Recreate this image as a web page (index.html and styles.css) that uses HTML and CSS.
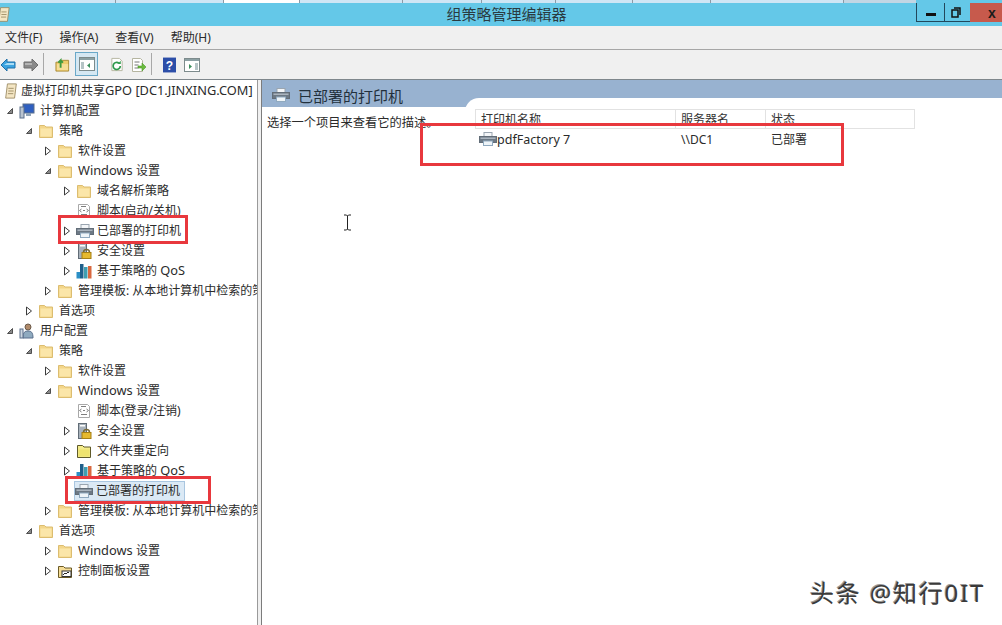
FILE: index.html
```html
<!DOCTYPE html>
<html lang="zh-CN">
<head>
<meta charset="utf-8">
<title>组策略管理编辑器</title>
<link rel="stylesheet" href="styles.css">
</head>
<body>
<svg class="defs" width="0" height="0" aria-hidden="true">
  <defs>
    <symbol id="folder" viewBox="0 0 16 16">
      <path d="M1.500 14.500V2.500h5l1.500 1.500h6.500v10.500z" fill="#f3d68a" stroke="#dcbd70"/>
      <path d="M2.500 13.500V5.500h11v8z" fill="#fbe6a9"/>
    </symbol>
    <symbol id="printer" viewBox="0 0 18 16">
      <rect x="5" y="1.500" width="8" height="5" fill="#f4f6f8" stroke="#9aa5b0"/>
      <rect x="0.500" y="5.500" width="17" height="6" fill="#6d7985" stroke="#626d78"/>
      <rect x="1.500" y="6.500" width="15" height="1.500" fill="#aab4be"/>
      <rect x="4.500" y="10" width="9" height="4.500" fill="#eef4f8" stroke="#8fa9bf"/>
    </symbol>
    <symbol id="open" viewBox="0 0 8 8"><path d="M1.500 6.500L6.500 1.500V6.500z" fill="#8a8a8a" stroke="#505050"/></symbol>
    <symbol id="closed" viewBox="0 0 8 10"><path d="M1.500 1L6.500 5 1.500 9z" fill="#fff" stroke="#3c3c3c"/></symbol>
    <symbol id="script" viewBox="0 0 16 16">
      <path d="M2.500 1.500h9l2 2v11h-11z" fill="#fff" stroke="#a8a8a8"/>
      <path d="M5.500 6l-2 1.500 2 1.500M10.500 6l2 1.500-2 1.500M7 7.500h2M5 11.500h6M5 3.500h5" fill="none" stroke="#7f7f7f"/>
    </symbol>
    <symbol id="security" viewBox="0 0 16 16">
      <rect x="2.500" y="0.500" width="8" height="15" fill="#a8b2bb" stroke="#616c76"/>
      <rect x="4" y="2" width="5" height="1.500" fill="#fff"/>
      <path d="M7.500 9.500a3 3 0 0 1 6 0" fill="none" stroke="#7b6a36" stroke-width="1.500"/>
      <rect x="6" y="9.500" width="9" height="6" fill="#e6b92e" stroke="#a57f15"/>
    </symbol>
    <symbol id="qos" viewBox="0 0 16 16">
      <rect x="0.500" y="9" width="3.500" height="6.500" fill="#2a8fc6"/>
      <rect x="4" y="1" width="3.500" height="14.500" fill="#1f5f8a"/>
      <rect x="8" y="4" width="3.500" height="11.500" fill="#3f9eb0"/>
      <rect x="12" y="3" width="3.500" height="12.500" fill="#d9683f"/>
    </symbol>
    <symbol id="redirect" viewBox="0 0 16 16">
      <path d="M1.500 14.500V2.500h5l1.500 1.500h6.500v10.500z" fill="#f4ec8c" stroke="#5f5a2a"/>
      <path d="M2.500 6.500h11v7h-11z" fill="#eee36f"/>
    </symbol>
    <symbol id="panel" viewBox="0 0 16 16">
      <path d="M1.500 14.500V3.500h5l1.500 1.500h6.500v9.500z" fill="#f6dd96" stroke="#6b5a26"/>
      <rect x="5" y="8" width="9" height="5.500" fill="#fff" stroke="#333"/>
      <path d="M6 12l2-2 1 1 2-2 1 1" fill="none" stroke="#2b2b2b"/>
    </symbol>
  </defs>
</svg>

<div class="app">
  <div class="top-strip">
    <span class="strip-tab s1"></span><span class="strip-tab s2"></span><span class="strip-tab s3"></span><span class="strip-tab s4"></span><span class="strip-tab s5"></span><span class="strip-tab s6"></span><span class="strip-tab s7"></span><span class="strip-tab s8"></span><span class="strip-tab s9"></span><span class="strip-tab s10"></span>
  </div>

  <header class="titlebar">
    <svg class="app-icon" viewBox="0 0 14 18"><path d="M3 1h10l-2 16H1z" fill="#f4e6c4" stroke="#9b8a62"/><path d="M4 6h6M4 9h6M3.500 12h6" stroke="#9b8a62"/></svg>
    <div class="title">组策略管理编辑器</div>
    <div class="winbtns">
      <div class="winbtn winbtn-min"><span class="min-bar"></span></div>
      <div class="winbtn winbtn-max">
        <svg class="max-icon" viewBox="0 0 10 11"><path d="M3 1h6v7M1 3h6v7H1z" fill="none" stroke="#111" stroke-width="1.500"/></svg>
      </div>
      <div class="winbtn winbtn-close">x</div>
    </div>
  </header>

  <nav class="menubar">
    <span>文件(F)</span><span>操作(A)</span><span>查看(V)</span><span>帮助(H)</span>
  </nav>

  <div class="toolbar">
    <svg class="tool tool-back" viewBox="0 0 16 14"><path d="M1 7l6-6v3h8v6H7v3z" fill="#3ba3e0" stroke="#1e6fa8"/><path d="M7 5h7v2H4z" fill="#a8dcf5"/></svg>
    <svg class="tool tool-fwd" viewBox="0 0 16 14"><path d="M15 7L9 1v3H1v6h8v3z" fill="#8a8a8a" stroke="#6f6f6f"/><path d="M2 5h7v2H2z" fill="#b4b4b4"/></svg>
    <span class="tool-sep sep-a"></span>
    <svg class="tool tool-up" viewBox="0 0 16 16"><path d="M1 14.500V5h5l1-2h7.500v11.500z" fill="#eecb6a" stroke="#a98a35"/><path d="M2 13.500V7h12v6.500z" fill="#f6dd96"/><path d="M6 11V3L3.500 5.500M6 3l2.500 2.500" fill="none" stroke="#3f9a3f" stroke-width="2"/></svg>
    <span class="tool-active">
      <svg class="tool-in" viewBox="0 0 16 14"><rect x="0.500" y="0.500" width="15" height="13" fill="#fff" stroke="#7d8b8c"/><rect x="1" y="1" width="14" height="2" fill="#8ba0a3"/><rect x="2" y="5" width="3" height="7" fill="#b5c4c6"/><path d="M11 6L8 8.500 11 11z" fill="#3c8f5c"/></svg>
    </span>
    <svg class="tool tool-refresh" viewBox="0 0 14 16"><path d="M1.500 1.500h8l3 3v10h-11z" fill="#fff" stroke="#b5b5a0"/><path d="M10.500 9.500a3.800 3.800 0 1 1-1.500-3" fill="none" stroke="#2f9a4d" stroke-width="1.800"/><path d="M11 4v3.500H7.500z" fill="#2f9a4d"/></svg>
    <svg class="tool tool-export" viewBox="0 0 16 16"><path d="M1.500 1.500h8l2 2v11h-10z" fill="#fff" stroke="#b5b5a0"/><path d="M3.500 5h5M3.500 8h4M3.500 11h4" stroke="#777"/><path d="M7 9h4V6l4 4-4 4v-3H7z" fill="#6bbb3f" stroke="#4f9a2a" stroke-width="0.600"/></svg>
    <span class="tool-sep sep-b"></span>
    <svg class="tool tool-help" viewBox="0 0 14 16"><rect width="14" height="16" fill="#2c4ea8"/><text x="7" y="13" class="help-q">?</text></svg>
    <svg class="tool tool-panel" viewBox="0 0 16 14"><rect x="0.500" y="0.500" width="15" height="13" fill="#fff" stroke="#7d8b8c"/><rect x="1" y="1" width="14" height="2" fill="#8ba0a3"/><rect x="11" y="5" width="3" height="7" fill="#b5c4c6"/><path d="M5 6l3 2.500L5 11z" fill="#3c8f5c"/></svg>
  </div>

  <main class="panes">
    <div class="tree">
      <div class="row d0"><span class="tw"></span><svg class="ico" viewBox="0 0 14 18"><path d="M3 1h10l-2 16H1z" fill="#f4e6c4" stroke="#9b8a62"/><path d="M4 6h6M4 9h6M3.500 12h6" stroke="#9b8a62"/></svg><span class="lbl">虚拟打印机共享<span class="en">GPO [DC1.JINXING.COM]</span></span></div>
      <div class="row d1"><svg class="tw"><use href="#open"/></svg><svg class="ico" viewBox="0 0 16 16"><rect x="4" y="1" width="11" height="9" fill="#2f5fc0" stroke="#5a6f8c"/><rect x="1" y="4" width="4" height="11" fill="#b9c4d0" stroke="#5a6f8c"/><rect x="7" y="10" width="5" height="3" fill="#8fa3b8"/></svg><span class="lbl">计算机配置</span></div>
      <div class="row d2"><svg class="tw"><use href="#open"/></svg><svg class="ico"><use href="#folder"/></svg><span class="lbl">策略</span></div>
      <div class="row d3"><svg class="tw"><use href="#closed"/></svg><svg class="ico"><use href="#folder"/></svg><span class="lbl">软件设置</span></div>
      <div class="row d3"><svg class="tw"><use href="#open"/></svg><svg class="ico"><use href="#folder"/></svg><span class="lbl"><span class="en">Windows </span>设置</span></div>
      <div class="row d4"><svg class="tw"><use href="#closed"/></svg><svg class="ico"><use href="#folder"/></svg><span class="lbl">域名解析策略</span></div>
      <div class="row d4"><span class="tw"></span><svg class="ico"><use href="#script"/></svg><span class="lbl">脚本(启动/关机)</span></div>
      <div class="row d4"><svg class="tw"><use href="#closed"/></svg><svg class="ico ico-wide"><use href="#printer"/></svg><span class="lbl">已部署的打印机</span></div>
      <div class="row d4"><svg class="tw"><use href="#closed"/></svg><svg class="ico"><use href="#security"/></svg><span class="lbl">安全设置</span></div>
      <div class="row d4"><svg class="tw"><use href="#closed"/></svg><svg class="ico"><use href="#qos"/></svg><span class="lbl">基于策略的<span class="en"> QoS</span></span></div>
      <div class="row d3"><svg class="tw"><use href="#closed"/></svg><svg class="ico"><use href="#folder"/></svg><span class="lbl">管理模板: 从本地计算机中检索的策略定义</span></div>
      <div class="row d2"><svg class="tw"><use href="#closed"/></svg><svg class="ico"><use href="#folder"/></svg><span class="lbl">首选项</span></div>
      <div class="row d1"><svg class="tw"><use href="#open"/></svg><svg class="ico" viewBox="0 0 16 16"><circle cx="9" cy="4" r="3" fill="#b08a6a" stroke="#6b5a4a"/><path d="M4 15c0-6 2-7 5-7s5 1 5 7z" fill="#8faabf" stroke="#5a6f8c"/><rect x="1" y="6" width="3" height="9" fill="#cdd6df" stroke="#5a6f8c"/></svg><span class="lbl">用户配置</span></div>
      <div class="row d2"><svg class="tw"><use href="#open"/></svg><svg class="ico"><use href="#folder"/></svg><span class="lbl">策略</span></div>
      <div class="row d3"><svg class="tw"><use href="#closed"/></svg><svg class="ico"><use href="#folder"/></svg><span class="lbl">软件设置</span></div>
      <div class="row d3"><svg class="tw"><use href="#open"/></svg><svg class="ico"><use href="#folder"/></svg><span class="lbl"><span class="en">Windows </span>设置</span></div>
      <div class="row d4"><span class="tw"></span><svg class="ico"><use href="#script"/></svg><span class="lbl">脚本(登录/注销)</span></div>
      <div class="row d4"><svg class="tw"><use href="#closed"/></svg><svg class="ico"><use href="#security"/></svg><span class="lbl">安全设置</span></div>
      <div class="row d4"><svg class="tw"><use href="#closed"/></svg><svg class="ico"><use href="#redirect"/></svg><span class="lbl">文件夹重定向</span></div>
      <div class="row d4"><svg class="tw"><use href="#closed"/></svg><svg class="ico"><use href="#qos"/></svg><span class="lbl">基于策略的<span class="en"> QoS</span></span></div>
      <div class="row d4"><span class="tw"></span><span class="sel-box"><svg class="ico ico-wide"><use href="#printer"/></svg><span class="lbl">已部署的打印机</span></span></div>
      <div class="row d3"><svg class="tw"><use href="#closed"/></svg><svg class="ico"><use href="#folder"/></svg><span class="lbl">管理模板: 从本地计算机中检索的策略定义</span></div>
      <div class="row d2"><svg class="tw"><use href="#open"/></svg><svg class="ico"><use href="#folder"/></svg><span class="lbl">首选项</span></div>
      <div class="row d3"><svg class="tw"><use href="#closed"/></svg><svg class="ico"><use href="#folder"/></svg><span class="lbl"><span class="en">Windows </span>设置</span></div>
      <div class="row d3"><svg class="tw"><use href="#closed"/></svg><svg class="ico"><use href="#panel"/></svg><span class="lbl">控制面板设置</span></div>
    </div>

    <div class="splitter"></div>

    <section class="detail">
      <div class="band">
        <svg class="band-ico"><use href="#printer"/></svg>
        <span class="band-title">已部署的打印机</span>
      </div>
      <div class="detail-body">
        <p class="desc">选择一个项目来查看它的描述。</p>
        <div class="listview">
          <div class="lv-head">
            <span class="col col-name">打印机名称</span><span class="col col-server">服务器名</span><span class="col col-state">状态</span>
          </div>
          <div class="lv-row">
            <span class="cell col-name"><svg class="cell-ico"><use href="#printer"/></svg><span class="en-cell">pdfFactory 7</span></span><span class="cell col-server">\\DC1</span><span class="cell col-state">已部署</span>
          </div>
        </div>
      </div>
    </section>
  </main>
</div>

<div class="mark mark-a"></div>
<div class="mark mark-b"></div>
<div class="mark mark-c"></div>
<svg class="ibeam" viewBox="0 0 9 17"><path d="M1 1h2.500l1 1 1-1H8M4.500 2v13M1 16h2.500l1-1 1 1H8" fill="none" stroke="#222"/></svg>
<div class="watermark">头条 @知行0IT</div>
</body>
</html>
```
FILE: styles.css
```css
* { box-sizing: border-box; }
html, body { margin: 0; padding: 0; }
body {
  width: 1002px;
  height: 625px;
  overflow: hidden;
  background: #fff;
  position: relative;
  font-family: "Noto Sans", "Noto Sans CJK SC", sans-serif;
  font-size: 12px;
  color: #2b2b2b;
}
.defs { position: absolute; }
.app { display: flex; flex-direction: column; height: 625px; }
.en { font-size: 12.8px; line-height: 0; }

.top-strip { height: 3px; background: #64c8e8; display: flex; flex: none; }
.strip-tab { height: 3px; background: #cfe6f5; border-right: 1px solid #8c9aa6; flex: none; }
.s1 { width: 116px; }
.s2 { width: 108px; }
.s3 { width: 76px; background: #fff; }
.s4 { width: 103px; }
.s5 { width: 79px; }
.s6 { width: 74px; }
.s7 { width: 77px; }
.s8 { width: 78px; }
.s9 { width: 133px; }
.s10 { width: 72px; background: #c2d6e4; border-right: 0; }

.titlebar {
  height: 23px;
  flex: none;
  background: #64c8e8;
  display: flex;
  align-items: center;
}
.app-icon { width: 12px; height: 17px; margin-left: -2px; flex: none; }
.title { flex: 1; text-align: center; font-size: 15px; line-height: 23px; padding-left: 87px; color: #2a3a40; }
.winbtns { display: flex; height: 19px; align-self: flex-start; flex: none; }
.winbtn {
  display: flex; align-items: center; justify-content: center;
  height: 19px;
  border-bottom: 1px solid #22485c;
  border-left: 1px solid #22485c;
}
.winbtn-min { width: 28px; }
.winbtn-max { width: 26px; }
.winbtn-close {
  width: 32px;
  background: #c75a4c;
  border: 0;
  color: #1a1a1a;
  font-weight: 700;
  font-size: 14px;
  font-family: "Liberation Sans", sans-serif;
  padding-left: 12px;
}
.min-bar { width: 10px; height: 3px; background: #111; margin-top: 5px; }
.max-icon { width: 10px; height: 11px; margin-left: -4px; }

.menubar {
  height: 24px;
  flex: none;
  display: flex;
  align-items: center;
  gap: 17px;
  padding: 0 0 2px 5px;
  background: #f0f0f0;
  border-bottom: 1px solid #a6a6a6;
  font-size: 12px;
}

.toolbar {
  height: 30px;
  flex: none;
  background: #f0f0f0;
  border-bottom: 1px solid #7f878c;
  display: flex;
  align-items: center;
}
.tool { flex: none; display: block; }
.tool-back { width: 16px; height: 14px; }
.tool-fwd { width: 16px; height: 14px; margin-left: 7px; }
.tool-sep { width: 1px; height: 22px; background: #a8a8a8; flex: none; margin-top: -1px; }
.sep-a { margin-left: 4px; }
.tool-up { width: 15px; height: 16px; margin-left: 11px; }
.tool-active {
  width: 23px; height: 24px; margin-left: 5px; margin-top: -2px;
  background: #d5e8f3;
  border: 1px solid #6aa8c8;
  display: flex; align-items: center; justify-content: center;
  flex: none;
}
.tool-in { width: 16px; height: 14px; }
.tool-refresh { width: 14px; height: 15px; margin-left: 12px; }
.tool-export { width: 16px; height: 16px; margin-left: 7px; }
.sep-b { margin-left: 4px; }
.tool-help { width: 13px; height: 16px; margin-left: 11px; }
.help-q { font: 700 13px "Liberation Sans", sans-serif; fill: #fff; text-anchor: middle; }
.tool-panel { width: 16px; height: 14px; margin-left: 8px; }

.panes { flex: 1; display: flex; min-height: 0; }
.tree { width: 257px; flex: none; overflow: hidden; background: #fff; padding-top: 1px; }
.row { height: 20px; display: flex; align-items: center; white-space: nowrap; }
.d0 { padding-left: 0; }
.d1 { padding-left: 6px; }
.d2 { padding-left: 25px; }
.d3 { padding-left: 44px; }
.d4 { padding-left: 63px; }
.tw { width: 8px; height: 10px; flex: none; display: block; }
.d0 .tw { width: 2px; }
.ico { width: 16px; height: 16px; margin-left: 5px; flex: none; display: block; }
.ico-wide { width: 18px; margin-right: -2px; }
.d0 .ico { margin-left: 1px; }
.d0 .lbl { margin-left: 2px; }
.lbl { margin-left: 5px; line-height: 18px; }
.sel-box {
  display: flex; align-items: center;
  width: 111px; height: 20px;
  margin-left: 3px;
  background: #dbe9f5;
  border: 1px solid #a9c6e0;
}
.sel-box .ico { margin-left: 0; }

.splitter { width: 5px; flex: none; background: #f0f0f0; border-left: 1px solid #9a9a9a; border-right: 1px solid #7c7c7c; }

.detail { flex: 1; display: flex; flex-direction: column; min-width: 0; position: relative; }
.band {
  height: 27px; flex: none;
  background: #98b2d0;
  display: flex; align-items: center;
  padding: 3px 0 0 10px;
}
.band-ico { width: 18px; height: 16px; flex: none; }
.band-title { margin-left: 8px; font-size: 15px; color: #22303c; }
.detail-body { flex: 1; position: relative; padding: 7px 0 0 5px; }
.desc { margin: 0; line-height: 18px; font-size: 12.25px; }

.listview {
  position: absolute;
  left: 203px;
  top: -9px;
  width: 537px;
  padding: 11px 0 0 10px;
  background: #fff;
  border-top-left-radius: 14px;
}
.lv-head { display: flex; height: 20px; width: 440px; border: 1px solid #e2e2e2; }
.col { height: 100%; line-height: 20px; padding-left: 5px; border-right: 1px solid #e2e2e2; flex: none; color: #333; }
.col-name { width: 200px; }
.col-server { width: 90px; }
.col-state { width: 148px; border-right: 0; }
.lv-row { display: flex; height: 20px; align-items: center; }
.cell { display: flex; align-items: center; padding-left: 5px; flex: none; }
.cell.col-name { width: 201px; }
.cell-ico { width: 18px; height: 16px; margin-right: 0; margin-left: -1px; flex: none; }
.en-cell { font-size: 12.5px; }

.mark { position: absolute; border: 3px solid #e8383d; pointer-events: none; }
.mark-a { left: 420px; top: 123px; width: 424px; height: 43px; }
.mark-b { left: 58px; top: 215px; width: 130px; height: 29px; }
.mark-c { left: 65px; top: 476px; width: 146px; height: 28px; }
.ibeam { position: absolute; left: 343px; top: 214px; width: 9px; height: 17px; }
.watermark {
  position: absolute; left: 810px; top: 575px;
  font-size: 24px; line-height: 36px; color: #3a3a3a;
  letter-spacing: 1.800px;
  text-shadow: 1px 1px 0 #fff, -1px -1px 0 #999;
  white-space: nowrap;
}
```
